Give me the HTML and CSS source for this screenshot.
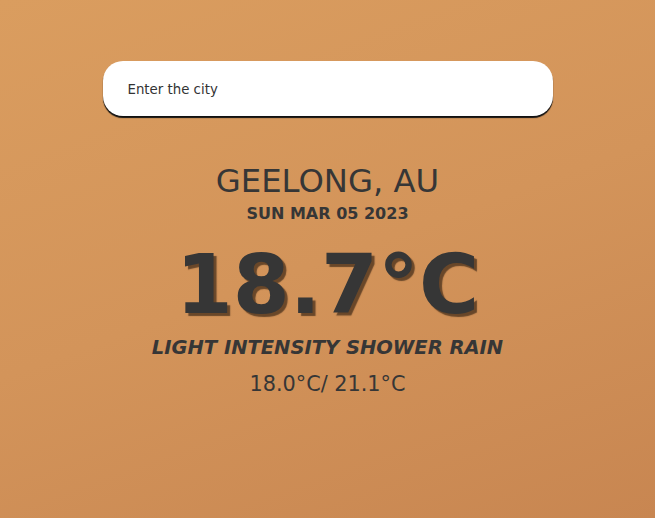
FILE: index.html
```html
<!DOCTYPE html>
<html lang="en">
<head>
<meta charset="utf-8">
<title>Weather</title>
<link rel="stylesheet" href="styles.css">
</head>
<body>
<main class="app">
  <div class="search">
    <input class="search-input" type="text" placeholder="Enter the city">
  </div>
  <section class="weather">
    <div class="city">GEELONG, AU</div>
    <div class="date">SUN MAR 05 2023</div>
    <div class="temp">18.7°C</div>
    <div class="desc">LIGHT INTENSITY SHOWER RAIN</div>
    <div class="minmax">18.0°C/ 21.1°C</div>
  </section>
</main>
</body>
</html>
```
FILE: styles.css
```css
html, body {
  margin: 0;
  padding: 0;
  height: 100%;
}
body {
  background: linear-gradient(160deg, #da9d5f 0%, #d3945a 50%, #c88651 100%);
  font-family: "DejaVu Sans", Verdana, sans-serif;
  color: #363636;
}
.app {
  display: flex;
  flex-direction: column;
  align-items: center;
  padding-top: 61px;
}
.search {
  width: 450px;
}
.search-input {
  box-sizing: border-box;
  width: 100%;
  height: 55px;
  border: none;
  outline: none;
  border-radius: 20px;
  padding: 2px 25px 0 25px;
  background: #fff;
  font-family: "DejaVu Sans", Verdana, sans-serif;
  font-size: 13.333px;
  color: #333;
  box-shadow: 0 2px 1px #111;
}
.search-input::placeholder {
  color: #333;
}
.weather {
  display: flex;
  flex-direction: column;
  align-items: center;
  margin-top: 49px;
}
.city {
  font-size: 32.3px;
  line-height: 1;
}
.date {
  font-size: 16px;
  font-weight: bold;
  line-height: 1;
  margin-top: 8.4px;
}
.temp {
  font-size: 82px;
  font-weight: bold;
  line-height: 1;
  margin-top: 22.2px;
  text-shadow: 3px 3px 1px rgba(70, 45, 25, 0.75);
}
.desc {
  font-size: 19.5px;
  font-weight: bold;
  font-style: italic;
  line-height: 1;
  margin-top: 11.8px;
}
.minmax {
  font-size: 20.8px;
  line-height: 1;
  margin-top: 17.2px;
}
```
